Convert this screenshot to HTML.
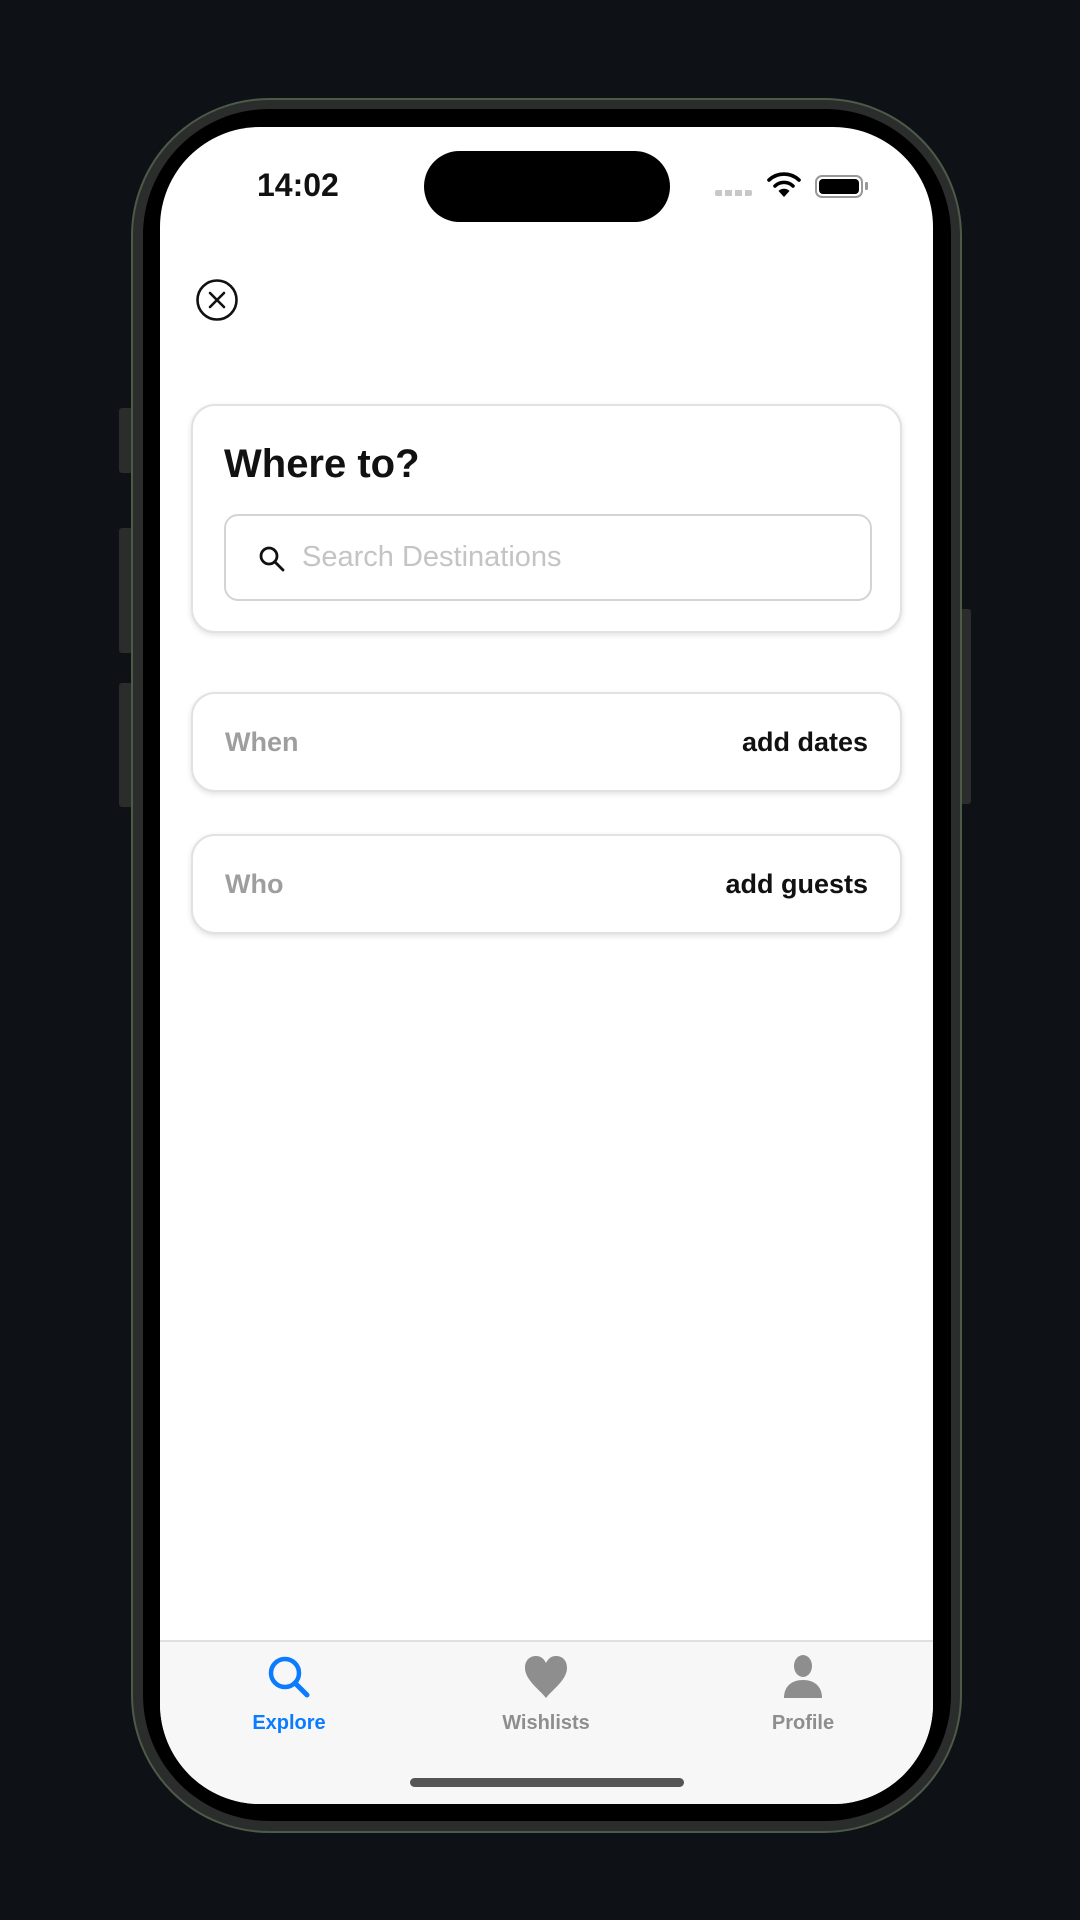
<!DOCTYPE html>
<html><head><meta charset="utf-8"><style>
*{margin:0;padding:0;box-sizing:border-box}
body{width:1080px;height:1920px;background:#0e1217;position:relative;overflow:hidden;font-family:"Liberation Sans",sans-serif}
.abs{position:absolute}
.frame{left:131px;top:98px;width:831px;height:1735px;border-radius:138px;background:#2b2d2c;border:2px solid #4d5a48}
.bezel{left:143px;top:109px;width:808px;height:1712px;border-radius:126px;background:#000}
.screen{left:160px;top:127px;width:773px;height:1677px;border-radius:100px;background:#fff;overflow:hidden}
.btn{background:#2b2d2c;border-radius:3px}
.card{position:absolute;left:31px;width:711px;background:#fff;border:2px solid #e2e2e2;border-radius:24px;box-shadow:0 2px 6px rgba(0,0,0,0.12)}
.row{display:flex;justify-content:space-between;align-items:center;padding:0 32px 0 32px;font-size:27px}
.row .l{color:#8e8e8e;font-weight:bold;opacity:.85}
.row .r{color:#111;font-weight:bold}
.tab{position:absolute;top:1513px;left:0;width:773px;height:164px;background:#f7f7f7;border-top:2px solid #e0e0e0}
.lab{position:absolute;top:70px;font-size:20px;font-weight:bold;transform:translateX(-50%);color:#8e8e8e}
</style></head><body>
<div class="abs btn" style="left:119px;top:408px;width:14px;height:65px"></div>
<div class="abs btn" style="left:119px;top:528px;width:14px;height:125px"></div>
<div class="abs btn" style="left:119px;top:683px;width:14px;height:124px"></div>
<div class="abs btn" style="left:958px;top:609px;width:13px;height:195px"></div>
<div class="abs frame"></div>
<div class="abs bezel"></div>
<div class="abs screen">
  <div class="abs" style="left:97px;top:40px;font-size:32px;font-weight:bold;color:#111">14:02</div>
  <div class="abs" style="left:264px;top:24px;width:246px;height:71px;border-radius:36px;background:#000"></div>
  <div class="abs" style="left:555px;top:63px;width:37px;height:6px;border-radius:2px;background:repeating-linear-gradient(90deg,#c8c8c8 0 7px,transparent 7px 10px)"></div>
  <svg class="abs" style="left:607px;top:43px" width="34" height="28" viewBox="0 0 34 28"><path d="M2 10 A22 22 0 0 1 32 10" stroke="#000" stroke-width="3.6" fill="none" stroke-linecap="round"/><path d="M8 16 A13 13 0 0 1 26 16" stroke="#000" stroke-width="3.6" fill="none" stroke-linecap="round"/><path d="M17 27 L11.5 21 A8 8 0 0 1 22.5 21 Z" fill="#000"/></svg>
  <div class="abs" style="left:655px;top:48px;width:48px;height:23px;border:2px solid #999;border-radius:7px;padding:2px"><div style="width:100%;height:100%;background:#000;border-radius:4px"></div></div>
  <div class="abs" style="left:705px;top:55px;width:3px;height:8px;background:#999;border-radius:1px"></div>
  <svg class="abs" style="left:35px;top:151px" width="44" height="44" viewBox="0 0 44 44"><circle cx="22" cy="22" r="19.5" stroke="#111" stroke-width="2.6" fill="none"/><path d="M15 15 L29 29 M29 15 L15 29" stroke="#111" stroke-width="2.6" stroke-linecap="round"/></svg>
  <div class="card" style="top:277px;height:229px">
    <div class="abs" style="left:31px;top:36px;font-size:40px;font-weight:bold;color:#111">Where to?</div>
    <div class="abs" style="left:31px;top:108px;width:648px;height:87px;border:2px solid #d4d4d4;border-radius:14px">
      <svg class="abs" style="left:32px;top:29px" width="28" height="28" viewBox="0 0 28 28"><circle cx="11" cy="11" r="8" stroke="#111" stroke-width="2.8" fill="none"/><path d="M17 17 L25 25" stroke="#111" stroke-width="2.8" stroke-linecap="round"/></svg>
      <div class="abs" style="left:76px;top:25px;font-size:29px;color:#c4c4c4">Search Destinations</div>
    </div>
  </div>
  <div class="card row" style="top:565px;height:100px"><span class="l">When</span><span class="r">add dates</span></div>
  <div class="card row" style="top:707px;height:100px"><span class="l">Who</span><span class="r">add guests</span></div>
  <div class="tab">
    <svg class="abs" style="left:106px;top:12px" width="46" height="46" viewBox="0 0 46 46"><circle cx="19" cy="19" r="14" stroke="#0a7cff" stroke-width="4.5" fill="none"/><path d="M29 29 L41 41" stroke="#0a7cff" stroke-width="5" stroke-linecap="round"/></svg>
    <div class="lab" style="left:129px;color:#0a7cff">Explore</div>
    <svg class="abs" style="left:362px;top:12px" width="48" height="46" viewBox="0 0 48 46"><path d="M24 44 C18 36 3 26 3 14 C3 6 8 2 14 2 C19 2 22 5 24 9 C26 5 29 2 34 2 C40 2 45 6 45 14 C45 26 30 36 24 44 Z" fill="#8e8e8e"/></svg>
    <div class="lab" style="left:386px">Wishlists</div>
    <svg class="abs" style="left:622px;top:12px" width="42" height="46" viewBox="0 0 42 46"><ellipse cx="21" cy="12" rx="9" ry="11" fill="#8e8e8e"/><path d="M2 44 C2 32 10 26 21 26 C32 26 40 32 40 44 Z" fill="#8e8e8e"/></svg>
    <div class="lab" style="left:643px">Profile</div>
  </div>
  <div class="abs" style="left:250px;top:1651px;width:274px;height:9px;border-radius:5px;background:#555"></div>
</div>
</body></html>
